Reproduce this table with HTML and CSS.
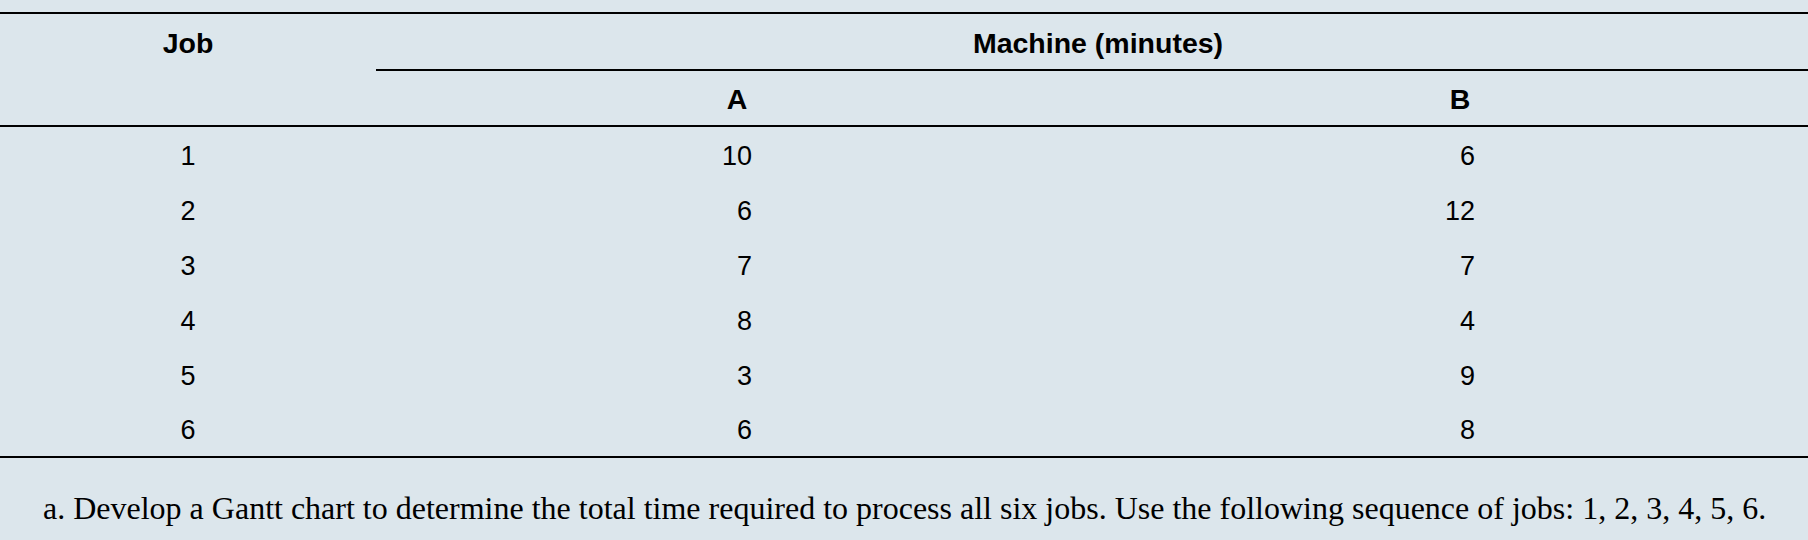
FILE: index.html
```html
<!DOCTYPE html>
<html lang="en">
<head>
<meta charset="utf-8">
<title>Job machine times</title>
<link rel="stylesheet" href="styles.css">
</head>
<body>
<div class="page">
  <table class="jobs">
    <colgroup>
      <col class="c-job">
      <col class="c-a">
      <col class="c-b">
    </colgroup>
    <thead>
      <tr class="h1">
        <th class="job" rowspan="2">Job</th>
        <th class="machine" colspan="2">Machine (minutes)</th>
      </tr>
      <tr class="h2">
        <th>A</th>
        <th class="col-b">B</th>
      </tr>
    </thead>
    <tbody>
      <tr><td>1</td><td><span class="num">10</span></td><td class="col-b"><span class="num">6</span></td></tr>
      <tr><td>2</td><td><span class="num">6</span></td><td class="col-b"><span class="num">12</span></td></tr>
      <tr><td>3</td><td><span class="num">7</span></td><td class="col-b"><span class="num">7</span></td></tr>
      <tr><td>4</td><td><span class="num">8</span></td><td class="col-b"><span class="num">4</span></td></tr>
      <tr><td>5</td><td><span class="num">3</span></td><td class="col-b"><span class="num">9</span></td></tr>
      <tr class="last"><td>6</td><td><span class="num">6</span></td><td class="col-b"><span class="num">8</span></td></tr>
    </tbody>
  </table>
  <p class="question">a. Develop a Gantt chart to determine the total time required to process all six jobs. Use the following sequence of jobs: 1, 2, 3, 4, 5, 6.</p>
</div>
</body>
</html>
```
FILE: styles.css
```css
html, body {
  margin: 0;
  padding: 0;
  background: #dce6ec;
}

.page {
  padding-top: 12px;
  color: #000;
}

.jobs {
  width: 100%;
  border-collapse: separate;
  border-spacing: 0;
  table-layout: fixed;
  font-family: "Liberation Sans", Arial, sans-serif;
  font-size: 27px;
}

.c-job { width: 376px; }
.c-a { width: 722px; }

.jobs th,
.jobs td {
  padding: 3px 0 0 0;
  text-align: center;
  vertical-align: middle;
}

.jobs th {
  font-weight: bold;
  font-size: 28.5px;
}

.jobs .col-b {
  padding-left: 14px;
}

.h1 th {
  border-top: 2px solid #000;
  height: 52px;
}

.h1 .machine {
  border-bottom: 2px solid #000;
  padding-left: 12px;
}

.h1 .job {
  vertical-align: top;
  line-height: 55px;
  padding-top: 2px;
  border-bottom: 2px solid #000;
}

.h2 th {
  height: 51px;
  border-bottom: 2px solid #000;
}

.jobs td {
  height: 52px;
}

.jobs tr.last td {
  height: 51px;
  border-bottom: 2px solid #000;
}

.num {
  display: inline-block;
  width: 2ch;
  text-align: right;
}

.question {
  margin: 31px 0 0 43px;
  font-family: "Liberation Serif", "Times New Roman", serif;
  font-size: 32px;
  line-height: 38px;
}
```
